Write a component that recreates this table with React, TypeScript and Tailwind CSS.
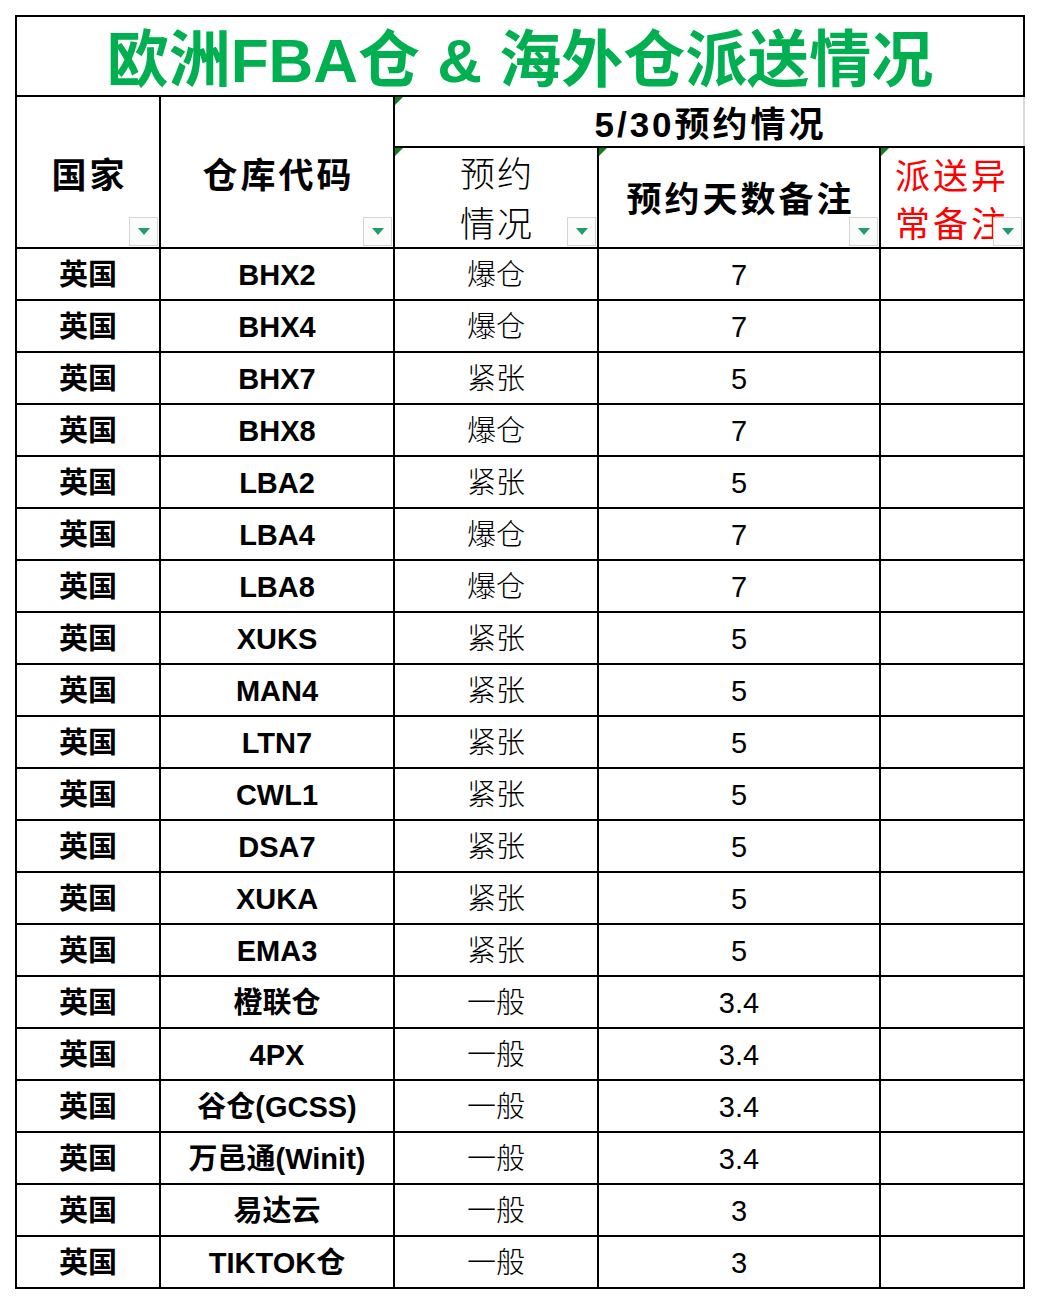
import React from "react";

const rows: [string, string, string][] = [
  ["BHX2", "爆仓", "7"],
  ["BHX4", "爆仓", "7"],
  ["BHX7", "紧张", "5"],
  ["BHX8", "爆仓", "7"],
  ["LBA2", "紧张", "5"],
  ["LBA4", "爆仓", "7"],
  ["LBA8", "爆仓", "7"],
  ["XUKS", "紧张", "5"],
  ["MAN4", "紧张", "5"],
  ["LTN7", "紧张", "5"],
  ["CWL1", "紧张", "5"],
  ["DSA7", "紧张", "5"],
  ["XUKA", "紧张", "5"],
  ["EMA3", "紧张", "5"],
  ["橙联仓", "一般", "3.4"],
  ["4PX", "一般", "3.4"],
  ["谷仓(GCSS)", "一般", "3.4"],
  ["万邑通(Winit)", "一般", "3.4"],
  ["易达云", "一般", "3"],
  ["TIKTOK仓", "一般", "3"],
];

function Filter() {
  return (
    <div className="absolute right-[1px] bottom-[1px] w-[29px] h-[29px] border border-[#d4d4d4] bg-[#fbfbfb] flex items-center justify-center">
      <svg width="12" height="7" viewBox="0 0 12 7">
        <polygon points="0,0 12,0 6,7" fill="#1f9d6c" />
      </svg>
    </div>
  );
}

function Corner() {
  return (
    <svg className="absolute left-0 top-0" width="8" height="8" viewBox="0 0 8 8">
      <polygon points="0,0 8,0 0,8" fill="#12801f" />
    </svg>
  );
}

const cjk = "font-['Liberation_Sans','Noto_Sans_CJK_SC',sans-serif]";

export default function App() {
  return (
    <div className={`w-[1040px] h-[1304px] bg-white pt-[15px] pl-[15px] ${cjk} text-black`}>
      <table className="table-fixed border-collapse w-[1008px]">
        <colgroup>
          <col className="w-[144px]" />
          <col className="w-[234px]" />
          <col className="w-[204px]" />
          <col className="w-[282px]" />
          <col className="w-[144px]" />
        </colgroup>
        <tbody>
          <tr className="h-[80px]">
            <td
              colSpan={5}
              className="border-2 border-black text-center text-[62px] font-bold text-[#00b050] leading-none p-0 pt-[10px]"
            >
              欧洲FBA仓 &amp; 海外仓派送情况
            </td>
          </tr>
          <tr className="h-[51px]">
            <td rowSpan={2} className="relative border-2 border-black text-center p-0 pt-[6px]">
              <div className="text-[35px] font-bold tracking-[3px] pl-[3px] leading-none">国家</div>
              <Filter />
            </td>
            <td rowSpan={2} className="relative border-2 border-black text-center p-0 pt-[6px]">
              <div className="text-[35px] font-bold tracking-[3px] pl-[3px] leading-none">仓库代码</div>
              <Filter />
            </td>
            <td
              colSpan={3}
              className="relative border-2 border-black border-r-[#d9d9d9] text-center p-0 pt-[5px] text-[35px] font-bold tracking-[3px] pl-[3px] leading-none"
            >
              <Corner />
              5/30预约情况
            </td>
          </tr>
          <tr className="h-[101px]">
            <td className="relative border-2 border-black text-center p-0 align-top pt-[9px]">
              <div className="flex flex-col items-center gap-[15px] text-[35px] font-light leading-none tracking-[2px] pl-[2px]">
                <span>预约</span>
                <span>情况</span>
              </div>
              <Corner />
              <Filter />
            </td>
            <td className="relative border-2 border-black text-center p-0 pt-[4px]">
              <div className="text-[35px] font-bold tracking-[3px] pl-[3px] leading-none">预约天数备注</div>
              <Corner />
              <Filter />
            </td>
            <td className="relative border-2 border-black p-0 align-top pt-[11px] overflow-hidden">
              <div className="flex flex-col gap-[13px] text-[35px] text-[#ff0000] leading-none tracking-[3px] pl-[14px] whitespace-nowrap">
                <span>派送异</span>
                <span>常备注</span>
              </div>
              <Corner />
              <Filter />
            </td>
          </tr>
          {rows.map(([code, status, days], i) => (
            <tr key={i} className="h-[52px]">
              <td className="border-2 border-black text-center p-0 pt-[2px] text-[29px] font-bold leading-none">
                英国
              </td>
              <td className="border-2 border-black text-center p-0 pt-[2px] text-[29px] font-bold leading-none">
                {code}
              </td>
              <td className="border-2 border-black text-center p-0 pt-[2px] text-[29px] font-light leading-none">
                {status}
              </td>
              <td className="border-2 border-black text-center p-0 pt-[2px] text-[29px] font-light leading-none">
                {days}
              </td>
              <td className="border-2 border-black p-0"></td>
            </tr>
          ))}
        </tbody>
      </table>
    </div>
  );
}
